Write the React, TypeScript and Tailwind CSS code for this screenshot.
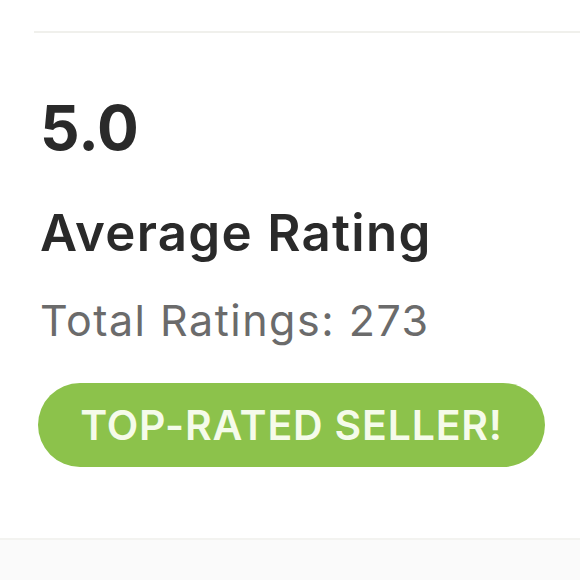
import React from "react";

export default function App() {
  return (
    <div
      className="w-[580px] h-[580px] bg-white flex flex-col overflow-hidden"
      style={{ fontFamily: "Inter, Lato, sans-serif" }}
    >
      <div className="h-[31px] shrink-0" />
      <div className="ml-[34px] h-[2px] bg-[#f0f0ec] shrink-0" />
      <div className="pl-[40px] pr-[35px] flex flex-col">
        <div className="mt-[64px] h-[62px] text-[62px] leading-none font-bold text-[#2a2a2a]">
          5.0
        </div>
        <div className="mt-[48px] h-[51px] text-[51px] leading-none font-semibold text-[#2a2a2a] tracking-[1.3px]">
          Average Rating
        </div>
        <div className="mt-[41px] h-[43px] text-[43px] leading-none font-normal text-[#6b6b6b] tracking-[1.5px]">
          Total Ratings: 273
        </div>
        <div className="mt-[41px] w-[507px] h-[84px] -ml-[2px] rounded-full bg-[#8cc24b] flex items-center justify-center">
          <span className="text-[41px] leading-none font-semibold text-[#f5fbea] tracking-[0.8px]">
            TOP-RATED SELLER!
          </span>
        </div>
      </div>
      <div className="mt-auto h-[42px] shrink-0 bg-[#fafafa] border-t-2 border-[#f3f3f0]" />
    </div>
  );
}
